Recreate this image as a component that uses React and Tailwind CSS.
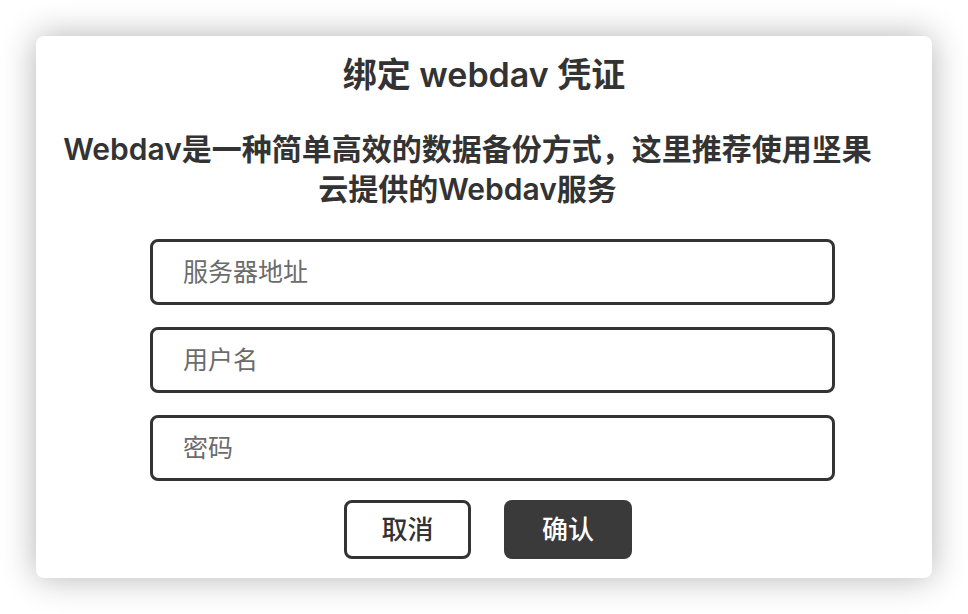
export default function App() {
  const fields = ["服务器地址", "用户名", "密码"];

  return (
    <div className="flex h-screen w-full items-center justify-center bg-white font-['Inter','Noto_Sans_CJK_SC',sans-serif] text-[#333]">
      <div className="flex h-[542px] w-[896px] flex-col rounded-[8px] bg-white pt-[17px] shadow-[0_0_34px_rgba(0,0,0,0.3)]">
        <h1 className="text-center text-[34px] font-semibold leading-[44px]">
          绑定 webdav 凭证
        </h1>
        <p className="ml-[24px] mt-[32px] w-[815px] text-center text-[30px] font-semibold leading-[40px]">
          Webdav是一种简单高效的数据备份方式，这里推荐使用坚果云提供的Webdav服务
        </p>

        <div className="ml-[114px] mt-[30px] flex w-[685px] flex-col gap-[22px]">
          {fields.map((label) => (
            <input
              key={label}
              type={label === "密码" ? "password" : "text"}
              placeholder={label}
              className="h-[66px] rounded-[8px] border-[3px] border-[#333] bg-white pl-[30px] text-[25px] text-[#333] outline-none placeholder:text-[#6b6b6b]"
            />
          ))}
        </div>

        <div className="ml-[308px] mt-[19px] flex gap-[33px]">
          <button className="h-[59px] w-[127px] rounded-[8px] border-[3px] border-[#333] bg-white text-[26px] font-medium text-[#333]">
            取消
          </button>
          <button className="h-[59px] w-[128px] rounded-[8px] bg-[#3a3a3a] text-[26px] font-medium text-white">
            确认
          </button>
        </div>
      </div>
    </div>
  );
}
